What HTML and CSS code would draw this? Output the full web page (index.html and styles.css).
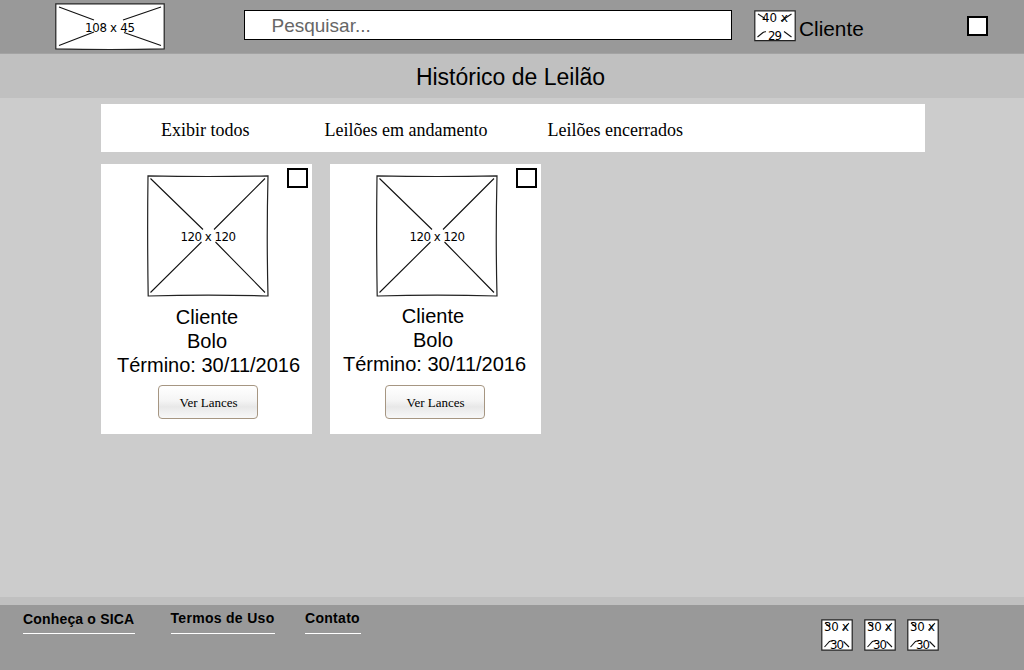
FILE: index.html
```
<!DOCTYPE html>
<html lang="pt-BR">
<head>
<meta charset="utf-8">
<title>Histórico de Leilão</title>
<link rel="stylesheet" href="styles.css">
</head>
<body>
<header class="topbar">
  <svg class="logo" width="110" height="48" viewBox="0 0 110 48">
    <path class="frame" d="M.8 .8H109.200V45.800Q55 47.200 .8 45.800Z"/>
    <path class="cross" d="M4 4L39 17M106 4L68 17M4 42.500L39 29M106 42.500L69 29.500"/>
    <text class="dim" x="30" y="29" textLength="50">108 x 45</text>
  </svg>
  <input class="search" type="text" placeholder="Pesquisar...">
  <svg class="avatar" width="42" height="32" viewBox="0 0 42 32">
    <path class="frame" d="M.8 .8H41.200V30.600H.8Z"/>
    <path class="cross" d="M4 4L11 8.500M37.500 4L27 11M3.500 27L9 22.500Q10.500 21.500 12 21.800M37.500 27L30 21.500"/>
    <text class="dim" x="8" y="12" textLength="26">40 x</text>
    <text class="dim" x="14" y="29.500" textLength="14">29</text>
  </svg>
  <span class="user">Cliente</span>
  <span class="box menu"></span>
</header>
<h1 class="title">Histórico de Leilão</h1>
<main class="content">
  <nav class="filters"><a>Exibir todos</a><a>Leilões em andamento</a><a>Leilões encerrados</a></nav>
  <section class="cards">
    <article class="card">
      <div class="media">
        <svg width="122" height="122" viewBox="0 0 122 122">
          <path class="frame" d="M1 .8Q61 2.200 121 .8Q119.500 61 121 121Q61 119.200 1.200 121Q.2 61 1 .8Z"/>
          <path class="cross" d="M3.500 3.500L56 54.500M118 3.500L67 54.500M3.500 117.500L54.500 67M118 117.500L68.500 67"/>
          <text class="dim" x="33.500" y="66" textLength="55.500">120 x 120</text>
        </svg>
        <span class="box"></span>
      </div>
      <p class="info">Cliente<br>Bolo<br><span class="due">Término: 30/11/2016</span></p>
      <button class="bids">Ver Lances</button>
    </article>
    <article class="card second">
      <div class="media">
        <svg width="122" height="122" viewBox="0 0 122 122">
          <path class="frame" d="M1 .8Q61 2.200 121 .8Q119.500 61 121 121Q61 119.200 1.200 121Q.2 61 1 .8Z"/>
          <path class="cross" d="M3.500 3.500L56 54.500M118 3.500L67 54.500M3.500 117.500L54.500 67M118 117.500L68.500 67"/>
          <text class="dim" x="33.500" y="66" textLength="55.500">120 x 120</text>
        </svg>
        <span class="box"></span>
      </div>
      <p class="info">Cliente<br>Bolo<br><span class="due">Término: 30/11/2016</span></p>
      <button class="bids">Ver Lances</button>
    </article>
  </section>
</main>
<footer class="footer">
  <nav class="links"><a class="about">Conheça o SICA</a><a class="terms">Termos de Uso</a><a class="contact">Contato</a></nav>
  <div class="social">
    <svg width="32" height="32" viewBox="0 0 32 32">
      <path class="frame" d="M.8 .8H31.200V31.200H.8Z"/>
      <path class="cross" d="M4 4L9 8M28 4L21.500 11M3.500 28L8.500 22.500Q10 21.500 11.500 22.500M28 28L22.500 22.500"/>
      <text class="dim" x="3" y="12" textLength="25">30 x</text>
      <text class="dim" x="9" y="29.800" textLength="14">30</text>
    </svg>
    <svg width="32" height="32" viewBox="0 0 32 32">
      <path class="frame" d="M.8 .8H31.200V31.200H.8Z"/>
      <path class="cross" d="M4 4L9 8M28 4L21.500 11M3.500 28L8.500 22.500Q10 21.500 11.500 22.500M28 28L22.500 22.500"/>
      <text class="dim" x="3" y="12" textLength="25">30 x</text>
      <text class="dim" x="9" y="29.800" textLength="14">30</text>
    </svg>
    <svg width="32" height="32" viewBox="0 0 32 32">
      <path class="frame" d="M.8 .8H31.200V31.200H.8Z"/>
      <path class="cross" d="M4 4L9 8M28 4L21.500 11M3.500 28L8.500 22.500Q10 21.500 11.500 22.500M28 28L22.500 22.500"/>
      <text class="dim" x="3" y="12" textLength="25">30 x</text>
      <text class="dim" x="9" y="29.800" textLength="14">30</text>
    </svg>
  </div>
</footer>
</body>
</html>
```
FILE: styles.css
```
* { box-sizing: border-box; }
body {
  margin: 0;
  height: 670px;
  display: flex;
  flex-direction: column;
  overflow: hidden;
  background: #ccc;
  color: #000;
  font-family: "Liberation Sans", Arial, sans-serif;
}
svg { display: block; flex: none; overflow: visible; }
.frame { fill: #fff; stroke: #222; stroke-width: 1.2; }
.cross { fill: none; stroke: #111; stroke-width: 1.1; }
.dim { font: 11.8px "DejaVu Sans", sans-serif; fill: #000; }

.topbar {
  height: 54px;
  flex: none;
  display: flex;
  align-items: flex-start;
  padding: 3px 36px 0 55px;
  background: #999;
  border-bottom: 1px solid #a3a3a3;
}
.search {
  width: 488px;
  height: 30px;
  margin: 7px 0 0 79px;
  padding: 1px 26.500px 0;
  border: 1px solid #000;
  background: #fff;
  font: 19px "Liberation Sans", Arial, sans-serif;
}
.search::placeholder { color: #666; opacity: 1; }
.avatar { margin: 7px 0 0 22px; }
.user { margin: 13px 0 0 3px; font-size: 20.8px; line-height: 26px; }
.box { width: 21px; height: 20px; border: 2px solid #000; background: #fff; }
.menu { margin: 13px 0 0 auto; }

.title {
  height: 44px;
  flex: none;
  margin: 0;
  padding-right: 3px;
  background: #c0c0c0;
  font-size: 23px;
  font-weight: normal;
  line-height: 46px;
  text-align: center;
}
.content { flex: 1; padding: 6px 99px 0 101px; }
.filters {
  height: 48px;
  display: flex;
  gap: 60px;
  padding-left: 60px;
  background: #fff;
  font: 18px/52px "Liberation Serif", "Times New Roman", serif;
  white-space: nowrap;
}
.filters a:nth-child(2) { margin-left: 15px; }
.cards { display: flex; gap: 18px; margin-top: 12px; }
.card {
  width: 211px;
  height: 270px;
  display: flex;
  flex-direction: column;
  align-items: flex-start;
  background: #fff;
}
.media {
  width: 100%;
  display: flex;
  justify-content: space-between;
  padding: 11px 4px 0 46px;
}
.media .box { margin-top: -7px; }
.info {
  margin: 8px 0 0 14px;
  width: 184px;
  font-size: 20px;
  line-height: 24px;
  text-align: center;
  white-space: nowrap;
}
.due { margin-left: 2px; }
.second .info { margin: 7px 0 1px 11px; }
.bids {
  width: 100px;
  height: 34px;
  margin: 8px 0 0 57px;
  padding: 2px 0 0 1px;
  border: 1px solid #a69682;
  border-radius: 4px;
  background: linear-gradient(#fff, #f5f5f5 45%, #e8e8e8 65%, #f8f8f8);
  color: #000;
  font: 13px "Liberation Serif", "Times New Roman", serif;
}
.second .bids { margin-left: 55px; }

.footer {
  height: 73px;
  flex: none;
  display: flex;
  justify-content: space-between;
  align-items: flex-start;
  padding: 0 85px 0 23px;
  border-top: 8px solid #c0c0c0;
  background: #999;
}
.links {
  display: flex;
  font-size: 14px;
  font-weight: bold;
  letter-spacing: .3px;
  white-space: nowrap;
}
.links a { height: 29px; border-bottom: 1px solid #fff; line-height: 27px; }
.about { width: 112px; padding-top: 1px; letter-spacing: .17px; }
.terms { width: 104px; margin-left: 35.500px; }
.contact { width: 56px; margin-left: 30.500px; }
.social { display: flex; gap: 11px; margin-top: 14px; }
```
